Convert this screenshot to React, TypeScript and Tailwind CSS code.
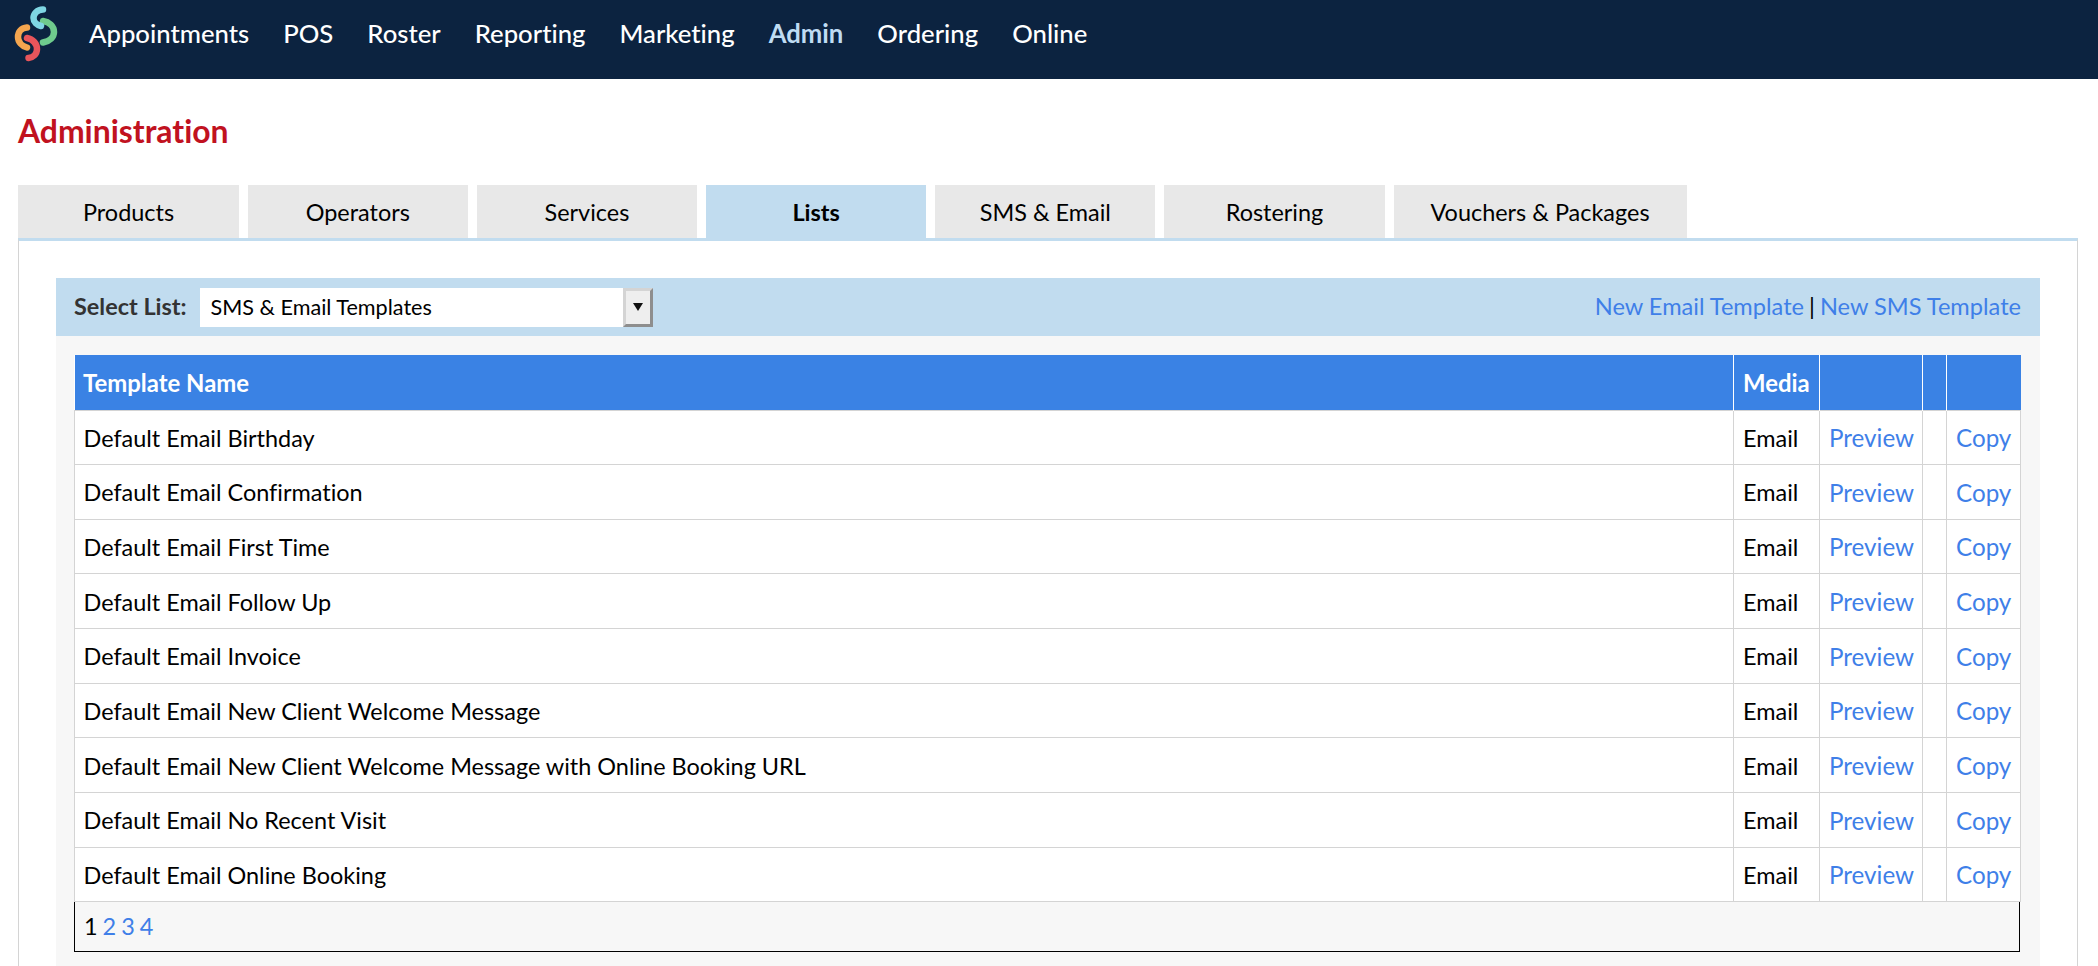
const navItems = ["Appointments", "POS", "Roster", "Reporting", "Marketing", "Admin", "Ordering", "Online"];
const tabs = ["Products", "Operators", "Services", "Lists", "SMS & Email", "Rostering", "Vouchers & Packages"];
const templates = [
  "Default Email Birthday",
  "Default Email Confirmation",
  "Default Email First Time",
  "Default Email Follow Up",
  "Default Email Invoice",
  "Default Email New Client Welcome Message",
  "Default Email New Client Welcome Message with Online Booking URL",
  "Default Email No Recent Visit",
  "Default Email Online Booking",
];

function Logo() {
  return (
    <svg width="80" height="79" viewBox="0 0 80 79" fill="none" strokeWidth="6.5" strokeLinecap="round" className="shrink-0">
      <path d="M43 21C49 22 54 26 54 32C54 37 50 41 43 42.5" stroke="#6fcb8d" />
      <path d="M43 9.5C37 9.5 33.5 14 33.5 18C33.5 22 37 25 41 26" stroke="#7fd6e3" />
      <path d="M27 27.5C21 28 18 32 18 37C18 42 22 46 27 47.5" stroke="#f5a64f" />
      <path d="M27 38C33 39 37 44 37 49C37 54 33 57.5 28.5 58" stroke="#e9555b" />
    </svg>
  );
}

export default function App() {
  return (
    <div className="h-[966px] overflow-hidden bg-white font-['Lato','Noto_Sans',sans-serif] text-[23.45px] text-black [font-variant-ligatures:none]">
      <header className="flex h-[79px] items-center bg-[#0c2340]">
        <Logo />
        <nav className="ml-[9px] flex items-center gap-[34px] pb-[12px] text-[25.7px] font-medium text-white">
          {navItems.map((item) => (
            <span key={item} className={item === "Admin" ? "font-bold text-[#bfdcf3]" : ""}>
              {item}
            </span>
          ))}
        </nav>
      </header>

      <main className="px-[18px]">
        <h1 className="flex h-[106px] items-center text-[31.9px] font-bold text-[#c1121f]">Administration</h1>

        <div className="flex gap-[8.9px] pl-[0.4px]">
          {tabs.map((tab) => (
            <div
              key={tab}
              className={
                tab === "Lists"
                  ? "flex h-[53px] min-w-[220.3px] items-center justify-center bg-[#c1dcef] px-[37px] pt-[2px] font-bold"
                  : "flex h-[53px] min-w-[220.3px] items-center justify-center bg-[#e8e8e8] px-[37px] pt-[2px]"
              }
            >
              {tab}
            </div>
          ))}
        </div>

        <section className="h-[800px] w-[2060px] border-x border-t-[3px] border-x-[#d4d4d4] border-t-[#c1dcef] px-[37px] pt-[37px]">
          <div className="flex h-[58px] items-center justify-between bg-[#c1dcef] pl-[18px] pr-[19px]">
            <div className="flex items-center">
              <span className="font-bold text-[#333333]">Select List:</span>
              <div className="ml-[13px] flex h-[39px] w-[453px] items-center justify-between bg-white pl-[11px] text-[21.6px]">
                <span>SMS &amp; Email Templates</span>
                <span className="flex h-[39px] w-[30px] items-center justify-center border-[3px] border-b-[#8e8e8e] border-l-[#d4d4d4] border-r-[#8e8e8e] border-t-[#d4d4d4] bg-[#eeeeee]">
                  <svg width="10" height="8" viewBox="0 0 10 8">
                    <path d="M0 0H10L5 8Z" fill="#111111" />
                  </svg>
                </span>
              </div>
            </div>
            <div className="text-[23.6px]">
              <a className="text-[#3f7fe8]">New Email Template</a>
              <span className="mx-[5px]">|</span>
              <a className="text-[#3f7fe8]">New SMS Template</a>
            </div>
          </div>

          <div className="h-[700px] bg-[#f7f7f7] px-[18px] pt-[19px]">
            <table className="w-[1946px] table-fixed border-collapse bg-white">
              <colgroup>
                <col className="w-[1659px]" />
                <col className="w-[86px]" />
                <col className="w-[103px]" />
                <col className="w-[24px]" />
                <col className="w-[74px]" />
              </colgroup>
              <thead>
                <tr className="h-[55px] bg-[#3a82e4] text-left text-[23.9px] font-bold text-white">
                  <th className="pl-[8.5px] pt-[2px]">Template Name</th>
                  <th className="border-l border-white pl-[9px] pt-[2px]">Media</th>
                  <th className="border-l border-white" />
                  <th className="border-l border-white" />
                  <th className="border-l border-white" />
                </tr>
              </thead>
              <tbody>
                {templates.map((name) => (
                  <tr key={name} className="h-[54.67px]">
                    <td className="border border-[#d4d4d4] pl-[8.5px] pt-[2px]">{name}</td>
                    <td className="border border-[#d4d4d4] pl-[9px] pt-[2px]">Email</td>
                    <td className="border border-[#d4d4d4] pl-[9px] pt-[2px] text-[24.2px] text-[#3f7fe8]">Preview</td>
                    <td className="border border-[#d4d4d4]" />
                    <td className="border border-[#d4d4d4] pl-[9px] pt-[2px] text-[24.2px] text-[#3f7fe8]">Copy</td>
                  </tr>
                ))}
              </tbody>
            </table>
            <div className="flex h-[50px] w-[1946px] items-center gap-[5px] border-x border-b border-black bg-[#f7f7f7] pb-[1px] pl-[9px]">
              <span>1</span>
              <a className="text-[#3f7fe8]">2</a>
              <a className="text-[#3f7fe8]">3</a>
              <a className="text-[#3f7fe8]">4</a>
            </div>
          </div>
        </section>
      </main>
    </div>
  );
}
